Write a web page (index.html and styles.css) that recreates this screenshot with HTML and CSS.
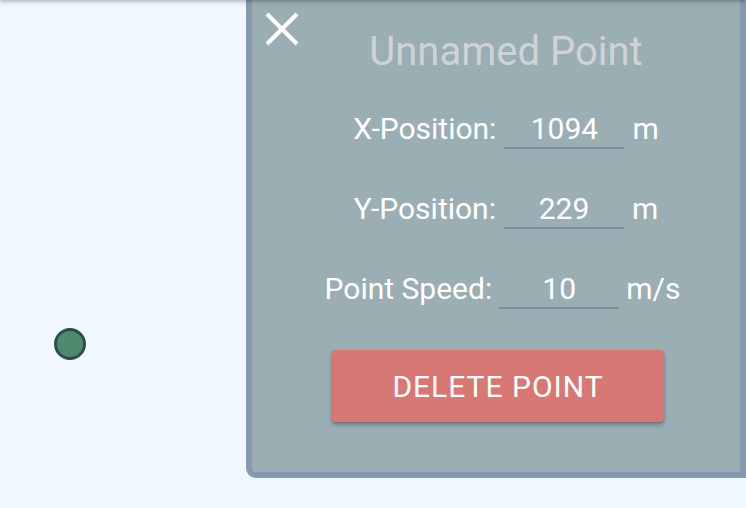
FILE: index.html
```html
<!DOCTYPE html>
<html>
<head>
<meta charset="utf-8">
<link rel="stylesheet" href="styles.css">
</head>
<body>
<div class="app">
  <div class="canvas">
    <div class="point"></div>
  </div>
  <aside class="panel">
    <button class="close" aria-label="Close">
      <svg width="36" height="36" viewBox="0 0 36 36"><path d="M3 3 L33 33 M33 3 L3 33" stroke="#fff" stroke-width="4" fill="none"/></svg>
    </button>
    <div class="fields">
      <h1 class="title">Unnamed Point</h1>
      <div class="row">
        <span class="label">X-Position:</span>
        <span class="input">1094</span>
        <span class="unit">m</span>
      </div>
      <div class="row">
        <span class="label">Y-Position:</span>
        <span class="input">229</span>
        <span class="unit">m</span>
      </div>
      <div class="row row-speed">
        <span class="label">Point Speed:</span>
        <span class="input">10</span>
        <span class="unit">m/s</span>
      </div>
    </div>
    <button class="delete">DELETE POINT</button>
  </aside>
  <div class="topshadow"></div>
</div>
</body>
</html>
```
FILE: styles.css
```css
html, body {
  margin: 0;
  padding: 0;
  height: 100%;
  background: #f0f7ff;
  font-family: Roboto, "Liberation Sans", sans-serif;
  overflow: hidden;
}
.app {
  position: relative;
  display: flex;
  height: 508px;
  width: 746px;
}
.canvas {
  position: relative;
  flex: 1;
}
.point {
  position: absolute;
  left: 54px;
  top: 328px;
  width: 26px;
  height: 26px;
  border-radius: 50%;
  background: #4f8a6e;
  border: 3px solid #2f4d47;
}
.panel {
  position: relative;
  box-sizing: border-box;
  width: 500px;
  height: 478px;
  background: #9aaeb4;
  border: 6px solid #8599b0;
  border-top: 0;
  border-radius: 0 0 0 10px;
  padding-top: 28px;
  display: flex;
  flex-direction: column;
  align-items: center;
}
.close {
  position: absolute;
  left: 12px;
  top: 11px;
  padding: 0;
  border: 0;
  background: none;
  width: 36px;
  height: 36px;
}
.close svg { display: block; }
.fields {
  display: flex;
  flex-direction: column;
  align-items: center;
  gap: 40px;
  padding-left: 20px;
}
.title {
  margin: 0 0 -7px 0;
  font-size: 40px;
  line-height: 48px;
  font-weight: 400;
  color: #cfd3d5;
}
.row {
  display: flex;
  align-items: flex-start;
  gap: 8px;
  height: 40px;
  font-size: 30px;
  line-height: 40px;
  color: #fff;
}
.row-speed {
  margin-left: -7px;
  gap: 7px;
}
.input {
  box-sizing: border-box;
  width: 120px;
  height: 40px;
  text-align: center;
  border-bottom: 2px solid #7e8e98;
}
.delete {
  margin-top: 41px;
  margin-left: 4px;
  width: 332px;
  height: 72px;
  border: 0;
  border-radius: 4px;
  background: #d77874;
  color: #fff;
  font-family: Roboto, "Liberation Sans", sans-serif;
  font-size: 30px;
  font-weight: 400;
  letter-spacing: 1px;
  box-shadow: 0 3px 4px rgba(0,0,0,0.25), 0 1px 2px rgba(0,0,0,0.15);
}
.topshadow {
  position: absolute;
  left: 0;
  right: 0;
  top: -10px;
  height: 10px;
  box-shadow: 0 1px 5px rgba(0,0,0,0.35);
}
```
